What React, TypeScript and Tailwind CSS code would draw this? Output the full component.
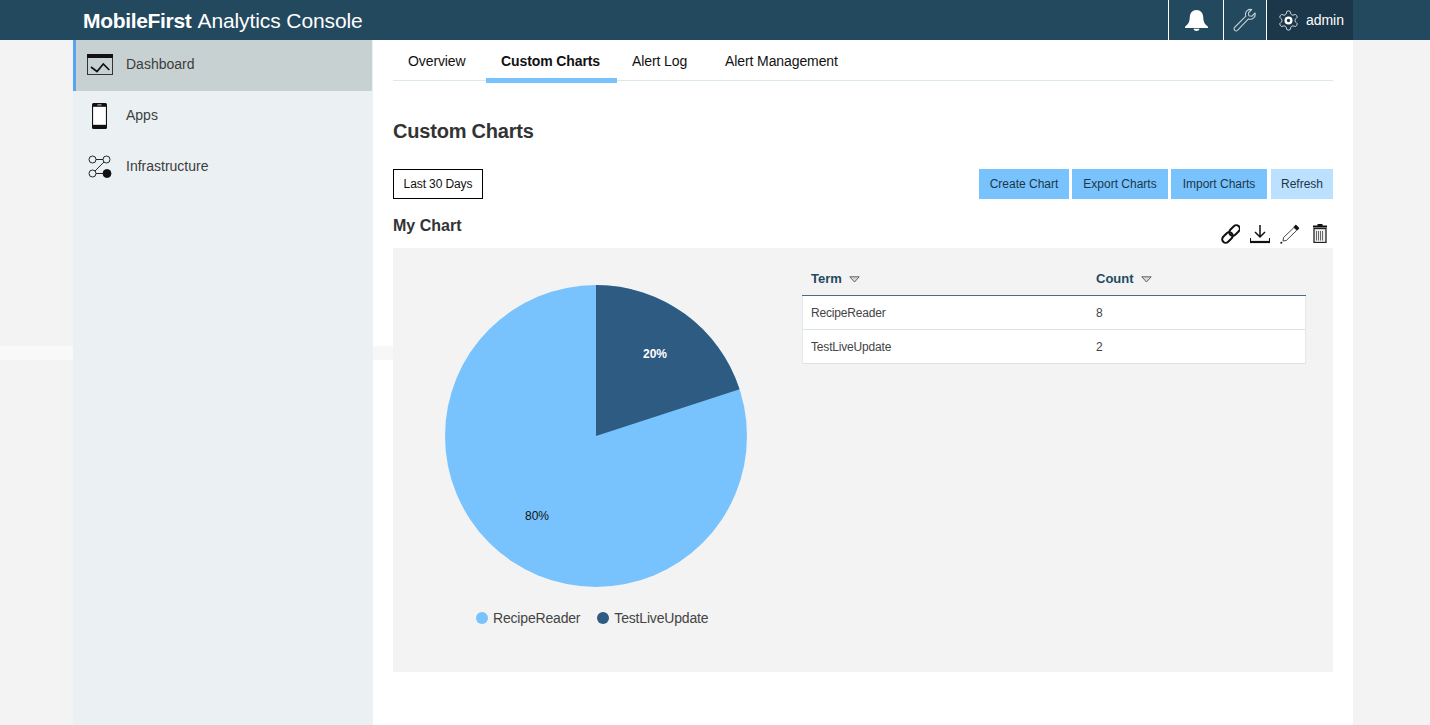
const font = { fontFamily: '"Liberation Sans", Arial, sans-serif' };

const BellIcon = () => (
    <svg width="23" height="21" viewBox="0 0 23 21" fill="#fff">
        <path d="M11.500 0C15.600 0 18 3 18.200 7c.2 4 .8 6.800 4.800 9.700V18H0v-1.300C4 13.800 4.600 11 4.800 7 5 3 7.400 0 11.500 0z" />
        <path d="M8.500 18.700h6c-.3 1.300-1.500 2.300-3 2.300s-2.700-1-3-2.300z" />
    </svg>
);

const WrenchIcon = () => (
    <svg width="24" height="24" viewBox="0 0 24 24" fill="none" stroke="#c3ced5" strokeWidth="1.100" strokeLinejoin="round">
        <path d="M1.500 19.500 12.800 8.200c-.7-2.200-.2-4.300 1.300-5.600 1.300-1.100 3-1.500 4.600-1.100l-3.300 3.300.4 3 3 .5 3.200-3.300c.5 1.800 0 3.600-1.300 4.900-1.400 1.300-3.400 1.700-5.300 1L4.500 22.400c-.9.700-2.100.6-2.800-.2-.7-.7-.9-1.800-.2-2.700z" />
    </svg>
);

const GearIcon = () => (
    <svg width="23" height="23" viewBox="0 0 24 24" fill="none" stroke="#dbe2e6" strokeWidth="1" strokeLinejoin="round">
        <path d="M12.220 2h-.44a2 2 0 0 0-2 2v.18a2 2 0 0 1-1 1.730l-.43.25a2 2 0 0 1-2 0l-.15-.08a2 2 0 0 0-2.730.73l-.22.38a2 2 0 0 0 .73 2.730l.15.1a2 2 0 0 1 1 1.720v.51a2 2 0 0 1-1 1.740l-.15.09a2 2 0 0 0-.73 2.730l.22.38a2 2 0 0 0 2.730.73l.15-.08a2 2 0 0 1 2 0l.43.25a2 2 0 0 1 1 1.730V20a2 2 0 0 0 2 2h.44a2 2 0 0 0 2-2v-.18a2 2 0 0 1 1-1.730l.43-.25a2 2 0 0 1 2 0l.15.08a2 2 0 0 0 2.730-.73l.22-.39a2 2 0 0 0-.73-2.730l-.15-.08a2 2 0 0 1-1-1.740v-.5a2 2 0 0 1 1-1.740l.15-.09a2 2 0 0 0 .73-2.730l-.22-.38a2 2 0 0 0-2.730-.73l-.15.08a2 2 0 0 1-2 0l-.43-.25a2 2 0 0 1-1-1.730V4a2 2 0 0 0-2-2z" />
        <circle cx="12" cy="12" r="3" stroke="#fff" strokeWidth="2.400" />
    </svg>
);

const DashboardIcon = () => (
    <svg width="26" height="21" viewBox="0 0 26 21" fill="none">
        <rect x="0.500" y="0.500" width="25" height="20" fill="none" stroke="#333" />
        <rect x="0" y="0" width="26" height="4" fill="#111" />
        <path d="M4 13l6 4.500 6.300-7.500 6 6" stroke="#111" strokeWidth="1.700" />
    </svg>
);

const PhoneIcon = () => (
    <svg width="15" height="26" viewBox="0 0 15 26">
        <rect x="0" y="0" width="15" height="26" rx="1.500" fill="#111" />
        <rect x="1.100" y="3.800" width="12.800" height="18" fill="#fff" />
        <rect x="5.500" y="1.400" width="4" height="1" fill="#ccc" />
    </svg>
);

const NodesIcon = () => (
    <svg width="24" height="24" viewBox="0 0 24 24" fill="none" stroke="#111" strokeWidth="0.900">
        <circle cx="4.500" cy="4.500" r="3.500" fill="#ebf0f3" />
        <circle cx="18.500" cy="4.500" r="3.500" fill="#ebf0f3" />
        <circle cx="4.500" cy="18.500" r="3.500" fill="#ebf0f3" />
        <circle cx="19" cy="18.500" r="4" fill="#111" />
        <path d="M8 4.500h7M8 18.500h7M16 7 7 16" />
    </svg>
);

const LinkIcon = () => (
    <svg width="20" height="20" viewBox="-1 0 20 20" fill="none" stroke="#111" strokeWidth="2">
        <g transform="rotate(-45 10 10)">
            <rect x="-1" y="6.500" width="12" height="7" rx="3.500" />
            <rect x="9" y="6.500" width="12" height="7" rx="3.500" />
        </g>
    </svg>
);

const DownloadIcon = () => (
    <svg width="20" height="20" viewBox="0 0 20 20" fill="none" stroke="#111">
        <path d="M10 1v11.500M5 8l5 5 5-5" strokeWidth="1.500" />
        <path d="M.5 14v3.500M19.500 14v3.500" strokeWidth="1" />
        <path d="M0 18h20" strokeWidth="2.200" />
    </svg>
);

const PencilIcon = () => (
    <svg width="20" height="20" viewBox="0 0 20 20" fill="none" stroke="#333" strokeWidth="0.900">
        <path d="M3.500 13.500 14 3.500l2.800 2.800L6.300 16.500 3 17z" fill="#fff" />
        <path d="M15.800 1l3.200 3.200-1.800 1.900-3.200-3.200z" fill="#111" stroke="#111" />
        <circle cx="1.300" cy="18.700" r="1" fill="#111" stroke="none" />
    </svg>
);

const TrashIcon = () => (
    <svg width="14" height="19" viewBox="0 0 14 19" fill="none">
        <path d="M4.500 0h5v1.500h4.500V3.500H0V1.500h4.500z" fill="#111" />
        <rect x="1" y="4.500" width="12" height="14" fill="#eee" stroke="#222" strokeWidth="1.300" />
        <path d="M3.500 7v9.500M5.500 7v9.500M7.500 7v9.500M9.500 7v9.500" stroke="#666" />
    </svg>
);

const Caret = () => (
    <svg width="11" height="7" viewBox="0 0 11 7" className="ml-[7px]">
        <path d="M.8.8h9.400L5.500 6z" fill="#d8d8d8" stroke="#555" strokeWidth="0.900" />
    </svg>
);

const PieChart = () => (
    <svg width="302" height="302" viewBox="0 0 302 302" className="block">
        <circle cx="151" cy="151" r="151" fill="#78c3fd" />
        <path d="M151 151V0A151 151 0 0 1 294.600 104.300z" fill="#2d5b82" />
        <text x="210" y="73" textAnchor="middle" fontSize="12" fontWeight="700" fill="#fff" style={font}>20%</text>
        <text x="92" y="235" textAnchor="middle" fontSize="12" fill="#111" style={font}>80%</text>
    </svg>
);

const tabs = [
    { label: 'Overview', width: 'w-[93px]', active: false },
    { label: 'Custom Charts', width: 'w-[131px]', active: true },
    { label: 'Alert Log', width: 'w-[93px]', active: false },
    { label: 'Alert Management', width: 'w-[139px]', active: false },
];

const rows = [
    { term: 'RecipeReader', count: 8 },
    { term: 'TestLiveUpdate', count: 2 },
];

const App = () => {
    return (
        <div className="w-[1430px] h-[725px] overflow-hidden flex flex-col bg-[#f3f3f3]" style={font}>
            <header className="h-10 flex shrink-0 bg-[#23495f] text-white">
                <div className="ml-[83px] flex-1 flex items-center text-[21px] leading-none">
                    <span className="font-bold tracking-[-0.32px]">MobileFirst</span>
                    <span className="ml-[6px] tracking-[-0.1px]">Analytics Console</span>
                </div>
                <div className="w-[55px] flex items-center justify-center border-l border-white">
                    <BellIcon />
                </div>
                <div className="w-[43px] flex items-center justify-center border-l border-white">
                    <WrenchIcon />
                </div>
                <div className="w-[87px] flex items-center border-l border-white bg-[#1c374a] pl-[10px]">
                    <GearIcon />
                    <span className="ml-[6px] text-[14px] tracking-[-0.05px]">admin</span>
                </div>
                <div className="w-[77px]" />
            </header>

            <div className="flex flex-1 min-h-0">
                <div className="w-[73px] relative">
                    <div className="absolute left-0 right-0 top-[306px] h-[14px] bg-[#f9f9f9]" />
                </div>

                <aside className="w-[300px] bg-[#ebf0f3] text-[14px] text-[#3d3d3d]">
                    <div className="h-[51px] mr-px flex items-center bg-[#c7d1d2] border-l-[3px] border-[#56a5f2] pl-[11px] pb-[2px]">
                        <DashboardIcon />
                        <span className="ml-[13px]">Dashboard</span>
                    </div>
                    <div className="h-[51px] flex items-center pl-[19px] pb-[2px]">
                        <PhoneIcon />
                        <span className="ml-[19px]">Apps</span>
                    </div>
                    <div className="h-[51px] flex items-center pl-[15px] pb-[2px]">
                        <NodesIcon />
                        <span className="ml-[14px]">Infrastructure</span>
                    </div>
                </aside>

                <main className="w-[980px] bg-white px-5 relative">
                    <div className="absolute left-0 w-5 top-[306px] h-[14px] bg-[#f7f7f7]" />
                    <nav className="h-[41px] flex border-b border-[#dde8e8]">
                        {tabs.map((tab) => (
                            <div
                                key={tab.label}
                                className={`${tab.width} h-[43px] pt-[12px] pl-[15px] text-[14px] leading-[18px] tracking-[-0.1px] text-[#111] ${tab.active ? 'font-bold border-b-[5px] border-[#78c3fd]' : ''}`}
                            >
                                {tab.label}
                            </div>
                        ))}
                    </nav>

                    <h1 className="mt-[38px] text-[20px] leading-6 font-bold tracking-[-0.2px] text-[#333]">Custom Charts</h1>

                    <div className="mt-[26px] flex items-center justify-between text-[12px]">
                        <div className="w-[90px] h-[30px] flex items-center justify-center border border-black text-[#111] tracking-[-0.1px]">
                            Last 30 Days
                        </div>
                        <div className="flex text-[#1d3649]">
                            <div className="w-[90px] h-[30px] flex items-center justify-center bg-[#78c3fd]">Create Chart</div>
                            <div className="ml-[3px] w-[96px] h-[30px] flex items-center justify-center bg-[#78c3fd]">Export Charts</div>
                            <div className="ml-[3px] w-[96px] h-[30px] flex items-center justify-center bg-[#78c3fd]">Import Charts</div>
                            <div className="ml-1 w-[62px] h-[30px] flex items-center justify-center bg-[#bbe1fe]">Refresh</div>
                        </div>
                    </div>

                    <div className="h-[49px] flex justify-between">
                        <h2 className="mt-[17px] text-[16px] leading-5 font-bold text-[#333]">My Chart</h2>
                        <div className="mt-[25px] flex items-start gap-[10px] mr-[3px]">
                            <LinkIcon />
                            <DownloadIcon />
                            <PencilIcon />
                            <div className="w-5 flex justify-center">
                                <TrashIcon />
                            </div>
                        </div>
                    </div>

                    <section className="h-[424px] bg-[#f3f3f3] flex">
                        <div className="w-[409px] pl-[52px] pt-[37px]">
                            <PieChart />
                            <div className="mt-[21px] ml-[31px] flex items-center text-[14px] leading-5 tracking-[-0.18px] text-[#444]">
                                <span className="w-3 h-3 rounded-full bg-[#78c3fd]" />
                                <span className="ml-[5px]">RecipeReader</span>
                                <span className="ml-[17px] w-3 h-3 rounded-full bg-[#2d5b82]" />
                                <span className="ml-[5px]">TestLiveUpdate</span>
                            </div>
                        </div>
                        <div className="w-[504px] pt-[13px]">
                            <div className="h-[35px] pt-[2px] flex items-center border-b border-[#4a6a86] text-[13px] font-bold text-[#23495f]">
                                <div className="w-[294px] pl-[9px] flex items-center">
                                    Term
                                    <Caret />
                                </div>
                                <div className="flex items-center">
                                    Count
                                    <Caret />
                                </div>
                            </div>
                            <div className="bg-white border-x border-[#e2e9e9] text-[12px] tracking-[-0.18px] text-[#444]">
                                {rows.map((row) => (
                                    <div key={row.term} className="h-[34px] flex items-center border-b border-[#dbe2e2]">
                                        <div className="w-[293px] pl-2">{row.term}</div>
                                        <div>{row.count}</div>
                                    </div>
                                ))}
                            </div>
                        </div>
                    </section>
                </main>

                <div className="w-[77px]" />
            </div>
        </div>
    );
};

export default App;
